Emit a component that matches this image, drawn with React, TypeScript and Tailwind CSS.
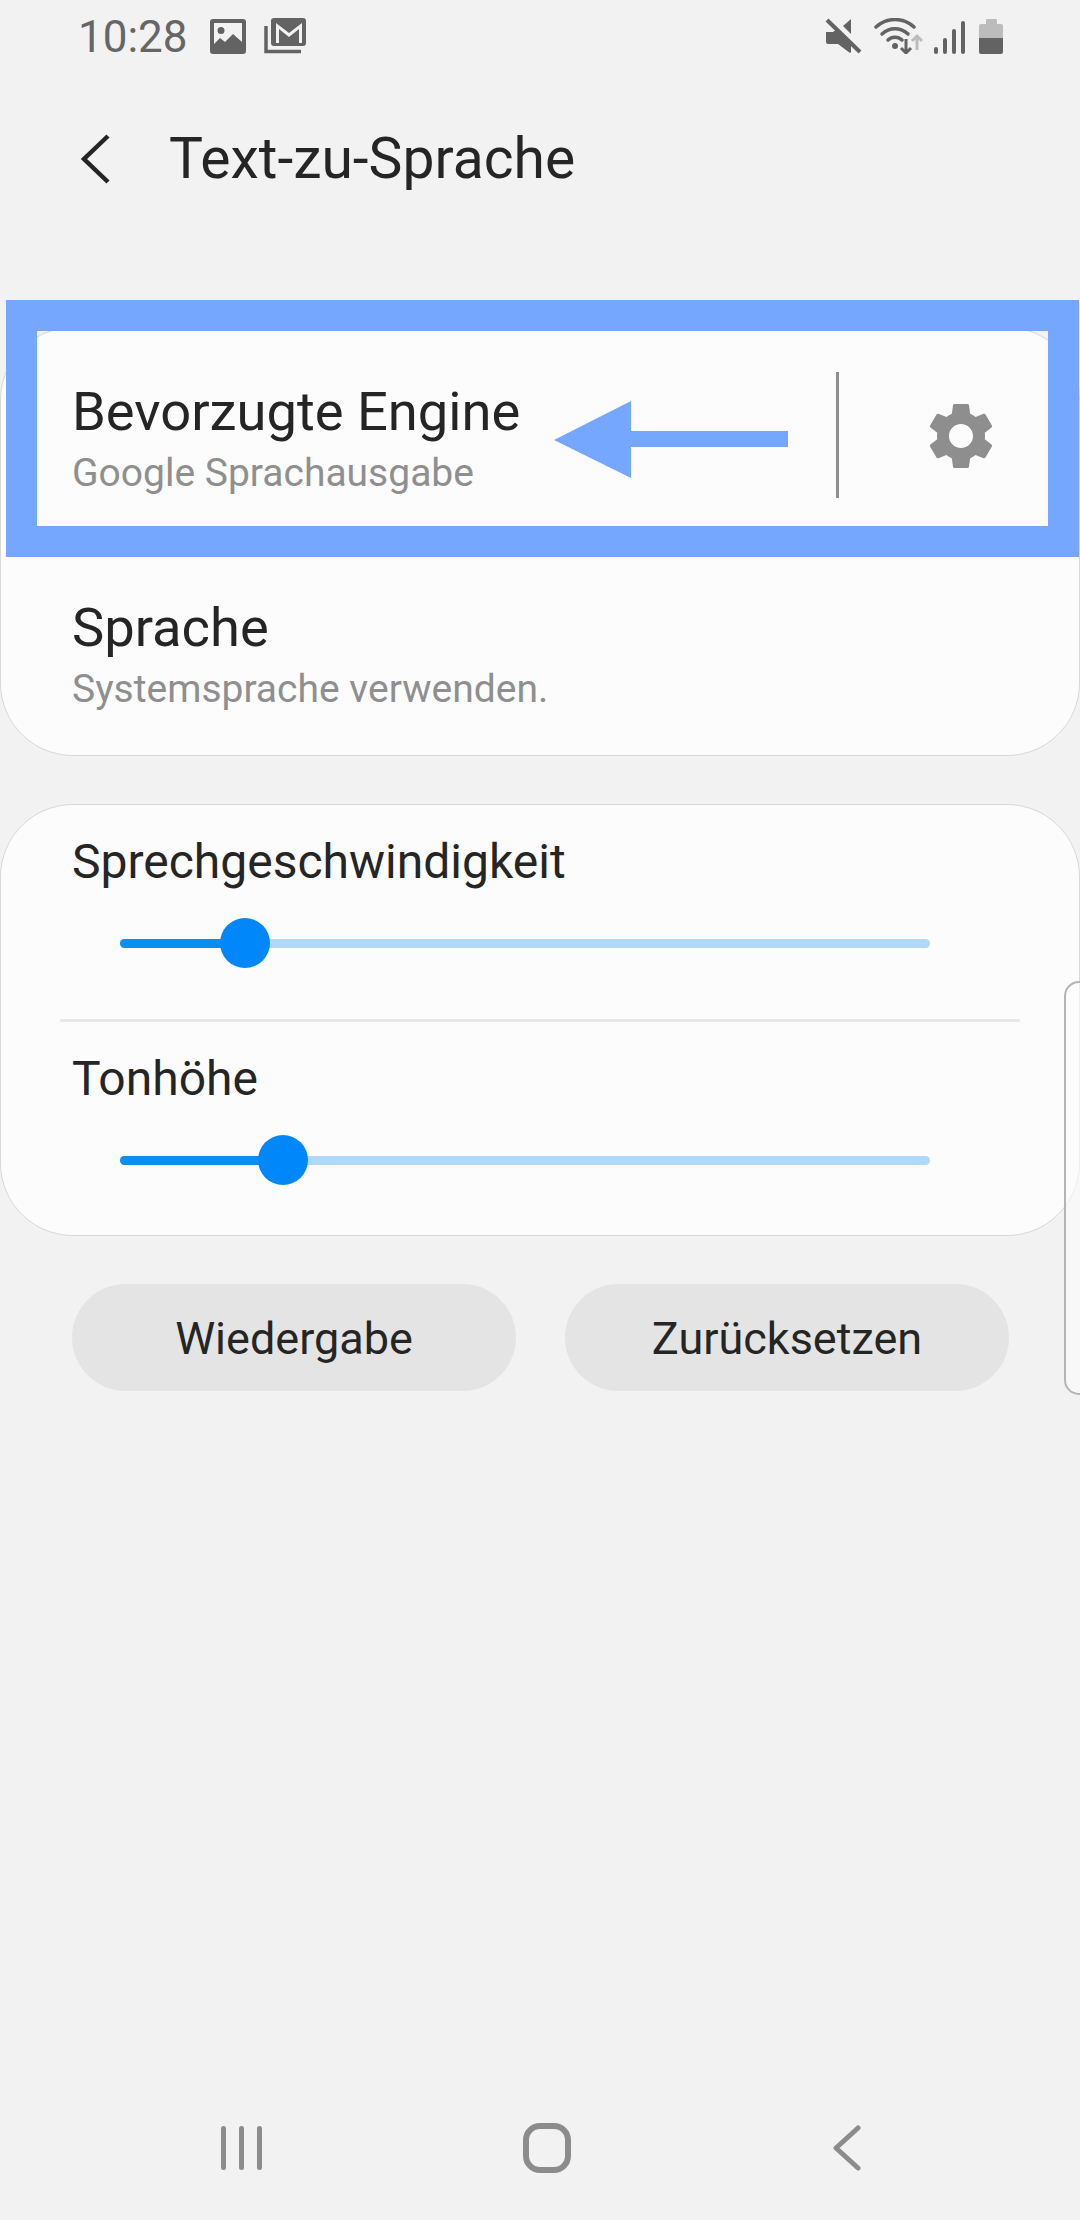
const GEAR = "M19.14 12.94c.04-.3.06-.61.06-.94 0-.32-.02-.64-.07-.94l2.03-1.58a.49.49 0 0 0 .12-.61l-1.92-3.32a.488.488 0 0 0-.59-.22l-2.39.96c-.5-.38-1.03-.7-1.62-.94l-.36-2.54a.484.484 0 0 0-.48-.41h-3.84c-.24 0-.43.17-.47.41l-.36 2.54c-.59.24-1.13.57-1.62.94l-2.39-.96c-.22-.08-.47 0-.59.22L2.74 8.87c-.12.21-.08.47.12.61l2.03 1.58c-.05.3-.09.63-.09.94s.02.64.07.94l-2.03 1.58a.49.49 0 0 0-.12.61l1.92 3.32c.12.22.37.29.59.22l2.39-.96c.5.38 1.03.7 1.62.94l.36 2.54c.05.24.24.41.48.41h3.84c.24 0 .44-.17.47-.41l.36-2.54c.59-.24 1.13-.56 1.62-.94l2.39.96c.22.08.47 0 .59-.22l1.92-3.32c.12-.22.07-.47-.12-.61l-2.01-1.58zM12 15.6c-1.98 0-3.6-1.62-3.6-3.6s1.62-3.6 3.6-3.6 3.6 1.62 3.6 3.6-1.62 3.6-3.6 3.6z"

const StatusLeft = () => (
  <div className="flex items-center">
    <span className="pt-[2px] text-[44px] leading-[50px] text-[#666666] w-[132px]">10:28</span>
    <svg width="36" height="35" viewBox="0 0 36 35">
      <path fillRule="evenodd" fill="#636363" d="M3 0h30a3 3 0 0 1 3 3v29a3 3 0 0 1-3 3H3a3 3 0 0 1-3-3V3a3 3 0 0 1 3-3zM4 4v21l6-6 5 4 8-8 9 8V4zM11 8a3.5 3.5 0 1 1 0 7 3.5 3.5 0 0 1 0-7z" />
    </svg>
    <svg width="42" height="36" viewBox="0 0 42 36" className="ml-[18px]">
      <path fill="none" stroke="#636363" strokeWidth="3.5" d="M2 8v25.5h35" />
      <path fillRule="evenodd" fill="#636363" d="M10 0h29a3 3 0 0 1 3 3v22a3 3 0 0 1-3 3H10a3 3 0 0 1-3-3V3a3 3 0 0 1 3-3zM12 5l13 10L38 5v20h-3V11L25 19 15 11v14h-3z" />
    </svg>
  </div>
)

const StatusRight = () => (
  <div className="flex items-end">
    <svg width="40" height="36" viewBox="0 0 40 36">
      <path fill="#636363" d="M1 14h7l4-3 14 14v9l-1 1-12-9H3a2 2 0 0 1-2-2zM26 1v15L18 8z" />
      <path stroke="#636363" strokeWidth="4" d="M2 2l33 32" />
    </svg>
    <svg width="60" height="36" viewBox="0 0 60 36" className="ml-[9px]">
      <g fill="none" stroke="#636363" strokeWidth="3.5" strokeLinecap="round">
        <path d="M2 9a28 28 0 0 1 38 0" />
        <path d="M8 16a19 19 0 0 1 26 0" />
        <path d="M14 22a10 10 0 0 1 14 0" />
      </g>
      <circle cx="21" cy="28" r="3" fill="#636363" />
      <path stroke="#636363" strokeWidth="3" fill="none" d="M32 21v14M27 30l5 5 5-5" />
      <path stroke="#bcbcbc" strokeWidth="3" fill="none" d="M43 32V18M38 23l5-5 5 5" />
    </svg>
    <div className="flex items-end gap-[5px]">
      <div className="w-[4px] h-[7px] rounded-full bg-[#636363]" />
      <div className="w-[4px] h-[16px] rounded-full bg-[#636363]" />
      <div className="w-[4px] h-[25px] rounded-full bg-[#636363]" />
      <div className="w-[4px] h-[33px] rounded-full bg-[#636363]" />
    </div>
    <div className="flex flex-col items-center ml-[14px]">
      <div className="w-[11px] h-[5px] rounded-t-[1px] bg-[#bcbcbc]" />
      <div className="w-[24px] h-[14px] rounded-t-[2px] bg-[#bcbcbc]" />
      <div className="w-[24px] h-[16px] rounded-b-[2px] bg-[#636363]" />
    </div>
  </div>
)

const Row = ({ title, sub, height, pad, children }: { title: string; sub: string; height: number; pad: number; children?: any }) => (
  <div className="flex items-center pl-[71px]" style={{ height }}>
    <div className="flex-1" style={{ paddingTop: pad }}>
      <div className="text-[54.3px] leading-[62px] text-[#252525]">{title}</div>
      <div className="mt-[7px] text-[39px] leading-[46px] text-[#8f8f8f]">{sub}</div>
    </div>
    {children}
  </div>
)

const Slider = ({ label, value, height }: { label: string; value: number; height: number }) => (
  <div className="pt-[29px]" style={{ height }}>
    <div className="pl-[71px] text-[48px] leading-[56px] text-[#252525]">{label}</div>
    <div className="relative ml-[119px] mr-[149px] mt-[49px] h-[9px] rounded-full bg-[#b0d8fb]">
      <div className="h-full rounded-l-full bg-[#0a8ef0]" style={{ width: value }} />
      <div className="absolute top-[-21px] w-[50px] h-[50px] rounded-full bg-[#0088fa]" style={{ left: value - 25 }} />
    </div>
  </div>
)

export default function App() {
  return (
    <div className="relative w-[1080px] h-[2220px] overflow-hidden flex flex-col bg-[#f2f2f2] font-['Roboto',sans-serif]">
      <div className="flex items-center justify-between h-[72px] pl-[78px] pr-[77px]">
        <StatusLeft />
        <StatusRight />
      </div>

      <div className="flex items-center h-[172px] pl-[80px] pt-[2px]">
        <svg width="30" height="50" viewBox="0 0 30 50" fill="none" stroke="#252525" strokeWidth="4.5">
          <path d="M28 2L4 25l24 23" />
        </svg>
        <h1 className="ml-[59px] text-[57px] leading-[60px] font-normal text-[#252525]">Text-zu-Sprache</h1>
      </div>

      <div className="mt-[83px] h-[429px] rounded-[73px] border border-[#d8d8d8] bg-[#fcfcfc]">
        <Row title="Bevorzugte Engine" sub="Google Sprachausgabe" height={216} pad={4}>
          <div className="w-[3px] h-[126px] mb-[2px] bg-[#8e8e8e]" />
          <div className="w-[240px] flex justify-center">
            <svg width="80" height="80" viewBox="0 0 24 24" className="ml-[3px]">
              <path fill="#8e8e8e" d={GEAR} />
            </svg>
          </div>
        </Row>
        <Row title="Sprache" sub="Systemsprache verwenden." height={211} pad={10} />
      </div>

      <div className="mt-[48px] h-[432px] rounded-[73px] border border-[#d8d8d8] bg-[#fcfcfc]">
        <Slider label="Sprechgeschwindigkeit" value={125} height={214} />
        <div className="ml-[59px] w-[960px] h-[3px] bg-[#e8e8e8]" />
        <Slider label="Tonhöhe" value={163} height={212} />
      </div>

      <div className="flex gap-[49px] mt-[48px] pl-[72px]">
        <button className="w-[444px] h-[107px] pt-[2px] rounded-full bg-[#e4e4e4] text-[45px] text-[#252525]">Wiedergabe</button>
        <button className="w-[444px] h-[107px] pt-[2px] rounded-full bg-[#e4e4e4] text-[45px] text-[#252525]">Zurücksetzen</button>
      </div>

      <div className="mt-auto flex items-center h-[50px] mb-[47px] pl-[221px]">
        <div className="flex gap-[13px]">
          <div className="w-[5px] h-[44px] rounded-full bg-[#8c8c8c]" />
          <div className="w-[5px] h-[44px] rounded-full bg-[#8c8c8c]" />
          <div className="w-[5px] h-[44px] rounded-full bg-[#8c8c8c]" />
        </div>
        <div className="ml-[261px] w-[48px] h-[50px] rounded-[17px] border-[6px] border-[#8c8c8c]" />
        <svg width="30" height="46" viewBox="0 0 30 46" fill="none" stroke="#8c8c8c" strokeWidth="5" strokeLinecap="round" strokeLinejoin="round" className="ml-[261px]">
          <path d="M26 3L4 23l22 20" />
        </svg>
      </div>

      {/* annotation drawn on top of the screenshot */}
      <div className="absolute left-[6px] top-[300px] w-[1073px] h-[257px] border-[31px] border-[#75a7ff]" />
      <svg width="240" height="80" viewBox="0 0 240 80" className="absolute left-[553px] top-[400px]">
        <path fill="#75a7ff" d="M1 40L78 1v30h157v16H78v31z" />
      </svg>

      <div className="absolute left-[1064px] top-[981px] w-[30px] h-[414px] rounded-[20px] border-2 border-[#b4b4b4] bg-[#fcfcfc]/60" />
    </div>
  )
}
